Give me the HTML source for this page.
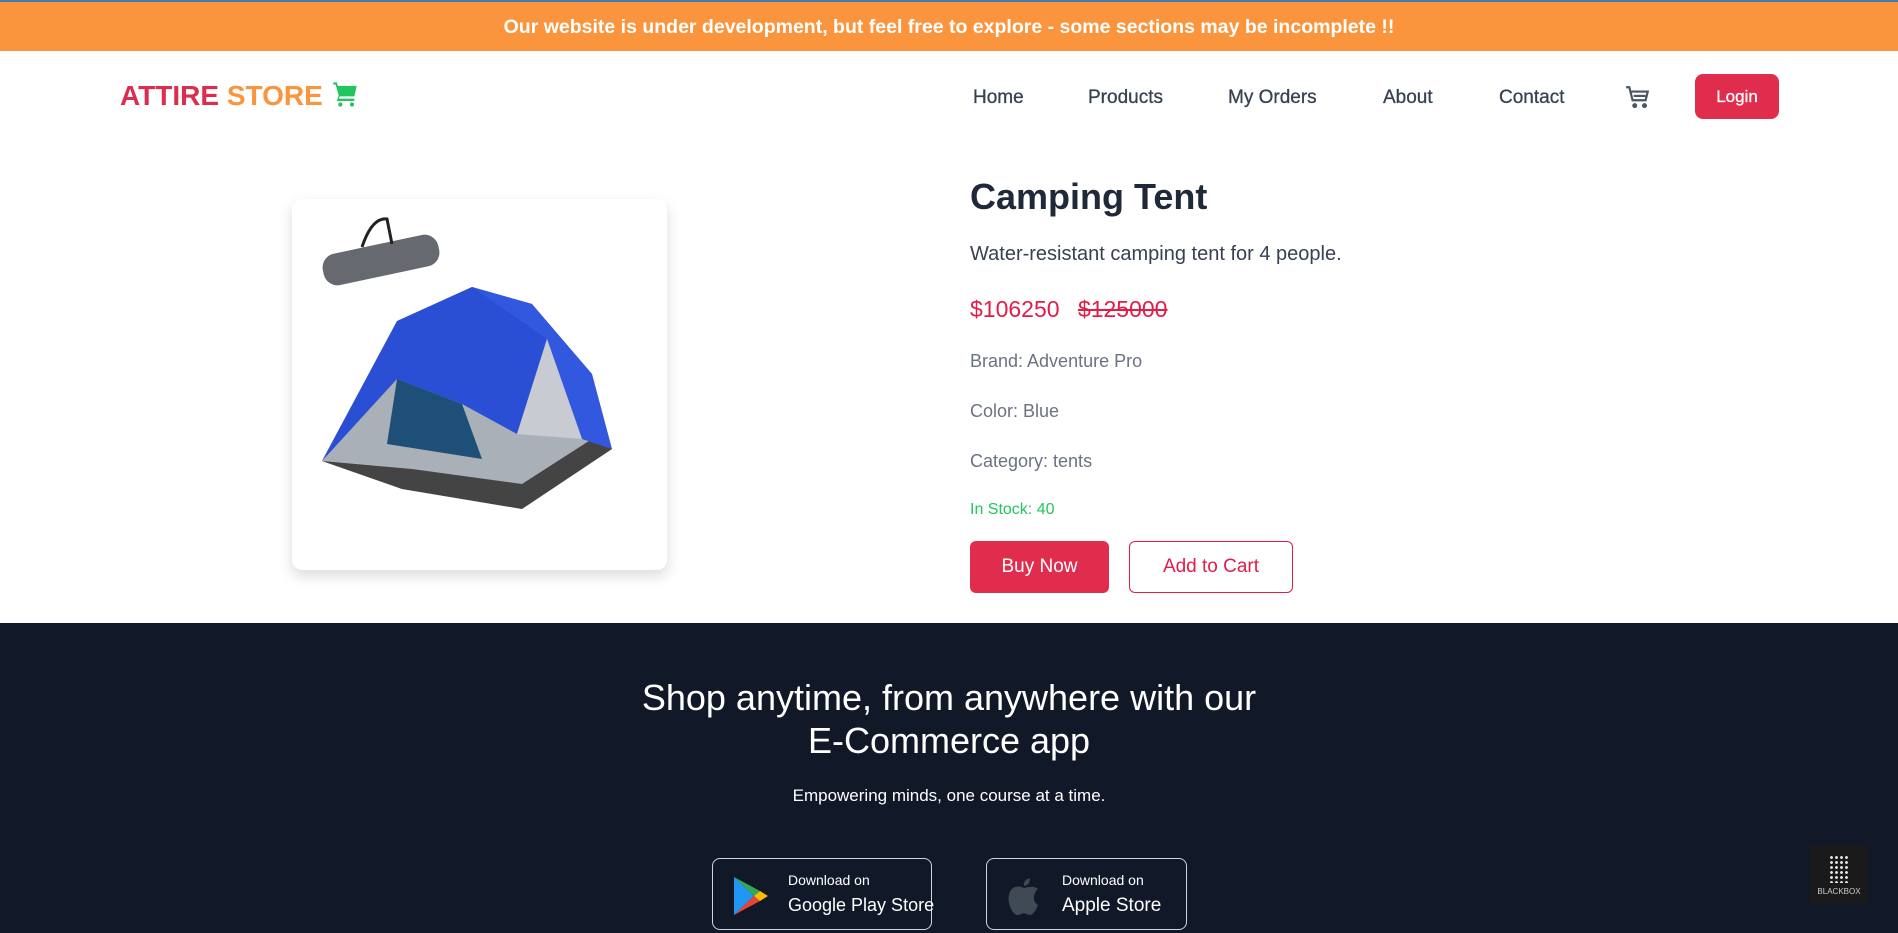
<!DOCTYPE html>
<html><head><meta charset="utf-8"><style>
*{margin:0;padding:0;box-sizing:border-box}
body{width:1898px;height:933px;overflow:hidden;font-family:"Liberation Sans",sans-serif;background:#fff;position:relative}
.banner{position:absolute;left:0;top:0;width:1898px;height:51px;background:#FB953D;border-top:2px solid #4a78b0;color:#fff;font-weight:bold;font-size:19.5px;text-align:center;line-height:51px}
.logo{position:absolute;left:120px;top:80px;font-size:28px;font-weight:bold;white-space:nowrap}
.nav a{position:absolute;top:87px;font-size:19px;color:#374151;text-decoration:none;-webkit-text-stroke:0.3px #374151}
.login{position:absolute;left:1695px;top:74px;width:84px;height:45px;background:#E02D4E;border-radius:8px;color:#fff;font-size:17px;text-align:center;line-height:45px;-webkit-text-stroke:0.3px #fff}
.card{position:absolute;left:292px;top:199px;width:375px;height:371px;background:#fff;border-radius:10px;box-shadow:0 6px 14px rgba(0,0,0,.15)}
.t{position:absolute;left:970px;white-space:nowrap}
.footer{position:absolute;left:0;top:623px;width:1898px;height:310px;background:#111827;color:#fff;text-align:center}
.btn{position:absolute;border:1px solid #d1d5db;border-radius:8px;height:72px;top:858px;color:#fff;white-space:nowrap}
</style></head><body>
<div class="banner">Our website is under development, but feel free to explore - some sections may be incomplete !!</div>
<div class="logo"><span style="color:#DC2D4E">ATTIRE</span> <span style="color:#FB953D">STORE</span>
<svg width="28" height="28" viewBox="0 0 24 24" style="vertical-align:-3px"><path fill="#22c55e" d="M2 2h3l1 3h16l-2 9H7.5L6.8 16H20v2H5l1.6-4.5L4 4H2z"/><circle cx="8" cy="21" r="1.8" fill="#22c55e"/><circle cx="18" cy="21" r="1.8" fill="#22c55e"/></svg></div>
<div class="nav">
<a style="left:973px">Home</a><a style="left:1088px">Products</a><a style="left:1228px">My Orders</a><a style="left:1383px">About</a><a style="left:1499px">Contact</a>
</div>
<svg style="position:absolute;left:1625px;top:84px" width="26" height="26" viewBox="0 0 24 24" fill="none" stroke="#4b5563" stroke-width="2"><path d="M1 3h3l3 12h12l2-8H6"/><path d="M8 11h11"/><circle cx="9" cy="20" r="1.3" fill="#4b5563"/><circle cx="18" cy="20" r="1.3" fill="#4b5563"/></svg>
<div class="login">Login</div>
<div class="card">
<svg width="375" height="371" viewBox="0 0 375 371">
<rect x="30" y="45" width="118" height="32" rx="14" fill="#666a70" transform="rotate(-12 89 61)"/>
<path d="M70 48 Q80 18 95 20 L100 45" stroke="#222" stroke-width="3" fill="none"/>
<path d="M30 262 L105 122 L180 88 L240 105 L300 175 L320 250 L230 310 L110 290 Z" fill="#aab0b8"/>
<path d="M30 262 L110 290 L230 310 L320 250 L300 240 L230 285 L120 270 Z" fill="#444"/>
<path d="M30 262 L105 122 L180 88 L240 105 L255 140 L225 235 L170 205 L105 180 Z" fill="#2a4fd4"/>
<path d="M180 88 L240 105 L300 175 L320 250 L290 240 L255 140 Z" fill="#3358e0"/>
<path d="M105 180 L170 205 L190 260 L95 245 Z" fill="#1d4f78"/>
<path d="M225 235 L290 240 L255 140 Z" fill="#c8ccd2"/>
</svg></div>
<div class="t" style="top:176px;font-size:36px;font-weight:bold;color:#1f2937">Camping Tent</div>
<div class="t" style="top:243px;font-size:20px;color:#374151">Water-resistant camping tent for 4 people.</div>
<div class="t" style="top:296px;font-size:23px;color:#e11d48">$106250 <span style="text-decoration:line-through;margin-left:12px">$125000</span></div>
<div class="t" style="top:351px;font-size:18px;color:#6b7280">Brand: Adventure Pro</div>
<div class="t" style="top:401px;font-size:18px;color:#6b7280">Color: Blue</div>
<div class="t" style="top:451px;font-size:18px;color:#6b7280">Category: tents</div>
<div class="t" style="top:501px;font-size:16px;color:#22c55e">In Stock: 40</div>
<div class="t" style="top:541px;width:139px;height:52px;background:#E02D4E;border-radius:6px;color:#fff;font-size:19px;text-align:center;line-height:52px">Buy Now</div>
<div style="position:absolute;left:1129px;top:541px;width:164px;height:52px;border:1px solid #e11d48;border-radius:6px;color:#e11d48;font-size:19px;text-align:center;line-height:50px">Add to Cart</div>
<div class="footer">
<div style="position:absolute;left:0;width:100%;top:53px;font-size:36px;line-height:43px">Shop anytime, from anywhere with our<br>E-Commerce app</div>
<div style="position:absolute;left:0;width:100%;top:163px;font-size:17px">Empowering minds, one course at a time.</div>
</div>
<div class="btn" style="left:712px;width:220px">
<svg style="position:absolute;left:19px;top:16px" width="38" height="42" viewBox="0 0 38 42"><path d="M2 2 L22 21 L2 40 Z" fill="#2196f3"/><path d="M2 2 L28 16 L22 21 Z" fill="#34a853"/><path d="M2 40 L28 26 L22 21 Z" fill="#ea4335"/><path d="M28 16 L36 21 L28 26 L22 21 Z" fill="#fbbc04"/></svg>
<div style="position:absolute;left:75px;top:13px;font-size:14px">Download on</div>
<div style="position:absolute;left:75px;top:36px;font-size:18px">Google Play Store</div></div>
<div class="btn" style="left:986px;width:201px">
<svg style="position:absolute;left:20px;top:17px" width="34" height="40" viewBox="0 0 34 40"><path d="M23 2 Q23 9 17 10 Q16 4 23 2Z" fill="#3f4a54"/><path d="M17 12 Q11 9 6 12 Q0 17 2 27 Q5 38 10 39 Q13 39 17 37 Q21 39 24 39 Q28 37 31 29 Q26 26 27 20 Q28 15 31 13 Q27 9 17 12Z" fill="#3f4a54"/></svg>
<div style="position:absolute;left:75px;top:13px;font-size:14px">Download on</div>
<div style="position:absolute;left:75px;top:36px;font-size:19px">Apple Store</div></div>
<div style="position:absolute;left:1810px;top:845px;width:58px;height:59px;background:#1a1a1a;border-radius:3px;color:#ccc;font-size:8px;text-align:center">
<div style="margin:10px auto 4px;width:20px;height:28px;background:radial-gradient(circle,#ddd 1.3px,transparent 1.6px) 0 0/5px 5px"></div>BLACKBOX</div>
</body></html>
